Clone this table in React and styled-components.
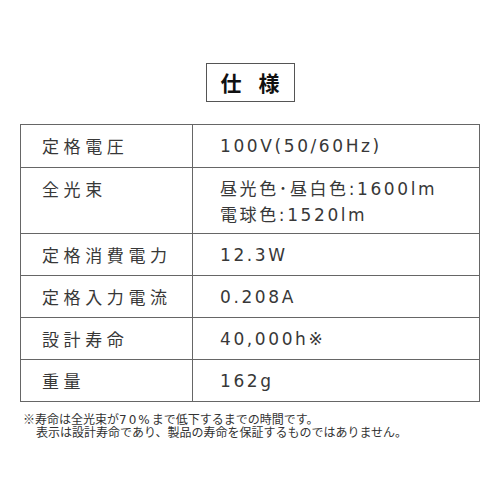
import React from "react";
import styled, { createGlobalStyle } from "styled-components";

const Global = createGlobalStyle`
  html, body { margin: 0; padding: 0; background: #fff; }
  body { font-family: "Noto Sans CJK JP", "Noto Sans", sans-serif; color: #333; }
`;

const Page = styled.div`
  width: 500px;
  height: 500px;
  display: flex;
  flex-direction: column;
  align-items: center;
  padding-top: 63px;
  box-sizing: border-box;
`;

const TitleBox = styled.div`
  width: 89px;
  height: 39px;
  box-sizing: border-box;
  border: 1.5px solid #555;
  display: flex;
  align-items: center;
  justify-content: center;
  gap: 17px;
  font-size: 21px;
  font-weight: 700;
  color: #111;
  line-height: 1;
`;

const Table = styled.div`
  margin-top: 22px;
  width: 460px;
  box-sizing: border-box;
  border: 1.5px solid #666;
  border-bottom: none;
`;

const Row = styled.div`
  display: grid;
  grid-template-columns: 172px 1fr;
  height: ${(p) => p.$h}px;
  box-sizing: border-box;
  border-bottom: 1.5px solid #666;
`;

const Cell = styled.div`
  display: flex;
  flex-direction: column;
  justify-content: ${(p) => (p.$top ? "flex-start" : "center")};
  padding-top: ${(p) => (p.$top ? 8 : 0)}px;
  font-size: 17px;
  line-height: 26px;
  color: #383838;
  white-space: nowrap;
`;

const Label = styled(Cell)`
  padding-left: 21px;
  letter-spacing: 4.6px;
  border-right: 1.5px solid #666;
`;

const Value = styled(Cell)`
  padding-left: 27px;
  font-family: "DejaVu Sans", "Noto Sans CJK JP", sans-serif;
  letter-spacing: 2.6px;
`;

const Notes = styled.div`
  width: 460px;
  margin-top: 10px;
  font-size: 12px;
  line-height: 13px;
  color: #333;
  white-space: nowrap;
`;

const NoteLine = styled.div`
  padding-left: ${(p) => (p.$indent ? 16 : 3)}px;
  height: 13px;
`;

const Wide = styled.span`
  display: inline-block;
  line-height: 13px;
  font-family: "DejaVu Sans", sans-serif;
  letter-spacing: 2px;
`;

const rows = [
  { label: "定格電圧", value: ["100V(50/60Hz)"], h: 43 },
  { label: "全光束", value: ["昼光色･昼白色:1600lm", "電球色:1520lm"], h: 66, top: true },
  { label: "定格消費電力", value: ["12.3W"], h: 42 },
  { label: "定格入力電流", value: ["0.208A"], h: 42 },
  { label: "設計寿命", value: ["40,000h※"], h: 42 },
  { label: "重量", value: ["162g"], h: 42 },
];

export default function App() {
  return (
    <>
      <Global />
      <Page>
        <TitleBox>
          <span>仕</span>
          <span>様</span>
        </TitleBox>
        <Table>
          {rows.map((r) => (
            <Row key={r.label} $h={r.h}>
              <Label $top={r.top}>{r.label}</Label>
              <Value $top={r.top}>
                {r.value.map((v) => (
                  <span key={v}>{v}</span>
                ))}
              </Value>
            </Row>
          ))}
        </Table>
        <Notes>
          <NoteLine>
            ※寿命は全光束が<Wide>70%</Wide>まで低下するまでの時間です。
          </NoteLine>
          <NoteLine $indent>表示は設計寿命であり、製品の寿命を保証するものではありません。</NoteLine>
        </Notes>
      </Page>
    </>
  );
}
